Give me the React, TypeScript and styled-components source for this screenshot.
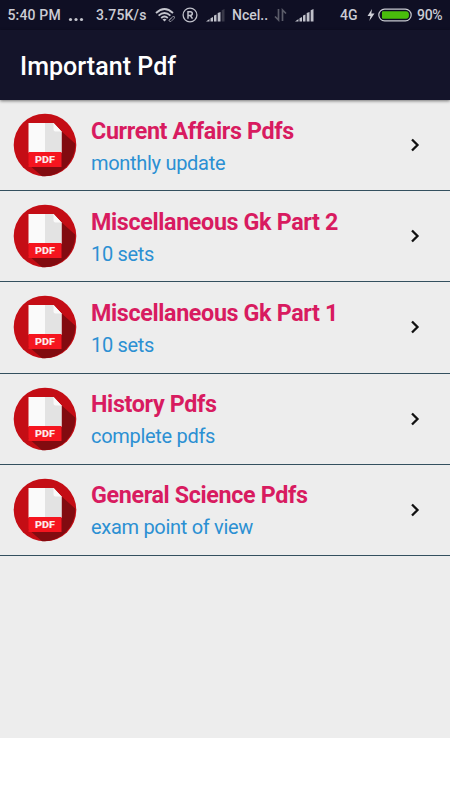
import React from 'react';
import styled, { createGlobalStyle } from 'styled-components';

const GlobalStyle = createGlobalStyle`
  body { margin: 0; background: #fff; font-family: Roboto, sans-serif; }
`;

const Screen = styled.div`
  width: 450px;
  height: 800px;
  display: flex;
  flex-direction: column;
  overflow: hidden;
  background: #fff;
`;

const StatusBar = styled.div`
  flex: none;
  height: 30px;
  display: flex;
  align-items: center;
  background: #0f0f24;
`;

const StatusText = styled.span<{ $gap: number; $width: number; $spacing?: number }>`
  flex: none;
  margin-left: ${p => p.$gap}px;
  width: ${p => p.$width}px;
  font-size: 14px;
  font-weight: 500;
  letter-spacing: ${p => p.$spacing ?? 0}px;
  line-height: 30px;
  white-space: nowrap;
  color: #cbccd4;
`;

const StatusIcon = styled.svg<{ $gap: number }>`
  flex: none;
  display: block;
  margin-left: ${p => p.$gap}px;
`;

const AppBar = styled.header`
  flex: none;
  height: 70px;
  display: flex;
  align-items: center;
  padding: 4px 0 0 20px;
  box-sizing: border-box;
  background: #14142a;
  box-shadow: 0 1px 3px rgba(0, 0, 0, 0.5);
  z-index: 1;
`;

const Heading = styled.h1`
  margin: 0;
  font-size: 25px;
  font-weight: 500;
  letter-spacing: 0.05px;
  line-height: 30px;
  color: #fff;
`;

const List = styled.main`
  flex: none;
  height: 638px;
  background: #ededed;
`;

const Row = styled.div`
  height: 91.2px;
  box-sizing: border-box;
  display: flex;
  align-items: center;
  padding: 0 25px 0 13px;
  border-bottom: 1px solid #34505f;
`;

const Badge = styled.svg`
  flex: none;
  display: block;
`;

const Labels = styled.div`
  flex: 1;
  margin-left: 14px;
  padding-top: 4.6px;
`;

const Title = styled.div`
  font-size: 23.3px;
  font-weight: 700;
  letter-spacing: -0.36px;
  line-height: 32px;
  white-space: nowrap;
  color: #d81b60;
`;

const Subtitle = styled.div`
  font-size: 20px;
  letter-spacing: -0.3px;
  line-height: 33.4px;
  white-space: nowrap;
  color: #2b90d3;
`;

const Chevron = styled.svg`
  flex: none;
  display: block;
`;

const items = [
  { title: 'Current Affairs Pdfs', subtitle: 'monthly update' },
  { title: 'Miscellaneous Gk Part 2', subtitle: '10 sets' },
  { title: 'Miscellaneous Gk Part 1', subtitle: '10 sets' },
  { title: 'History Pdfs', subtitle: 'complete pdfs' },
  { title: 'General Science Pdfs', subtitle: 'exam point of view' },
];

const Wifi = () => (
  <StatusIcon $gap={8} width="21" height="16" viewBox="0 0 21 16" fill="none" stroke="#c4c5cd" strokeWidth="1.8">
    <path d="M1 6Q9.500 -2 18 6M3.600 8.700Q9.500 3.200 15.400 8.700M6.200 11Q9.500 8 12.800 11" />
    <path d="M7.500 12.500L9.500 14.500L11.500 12.500Q9.500 10.800 7.500 12.500Z" fill="#c4c5cd" stroke="none" />
    <path d="M14 13.500L16.500 11M16 14.500L19.500 11Q20 9 18 9.500L14 13Q14 15 16 14.500Z" stroke="#858692" strokeWidth="1" />
  </StatusIcon>
);

const Registered = () => (
  <StatusIcon $gap={6} width="16" height="16" viewBox="0 0 16 16" fill="none" stroke="#bfc0c9">
    <circle cx="8" cy="8" r="6.900" strokeWidth="1.300" />
    <path d="M6 11.700V4.700H8.300Q10.300 4.700 10.300 6.600T8.300 8.500H6M8.300 8.500L10.500 11.700" strokeWidth="1.500" />
  </StatusIcon>
);

const Signal = ({ gap, weak }: { gap: number; weak?: boolean }) => (
  <StatusIcon $gap={gap} width="19" height="14" viewBox="0 0 19 14" fill="#bfc0c9">
    <path d="M0 13.500L3.500 11V13.500ZM4.500 10.300L7 9V13.500H4.500ZM8 7.500L10.500 6.500V13.500H8ZM11.700 5L14.500 4V13.500H11.700Z" />
    <path d="M15.700 2.300L18.500 1V13.500H15.700Z" fill={weak ? '#383848' : '#bfc0c9'} />
  </StatusIcon>
);

const DataArrows = () => (
  <StatusIcon $gap={6} width="14" height="14" viewBox="0 0 14 14" fill="none" stroke="#5b5c69" strokeWidth="1.700">
    <path d="M4.500 1V12L1 8.500M8.500 13V2L12 5.500" />
  </StatusIcon>
);

const Bolt = () => (
  <StatusIcon $gap={9} width="8" height="14" viewBox="0 0 8 14" fill="#d0d1d8">
    <path d="M5 1L0.500 8H3.500L2.300 13L7.500 5.500H4.300Z" />
  </StatusIcon>
);

const Battery = () => (
  <StatusIcon $gap={3} width="34" height="14" viewBox="0 0 34 14">
    <rect x="0.800" y="1.200" width="32.400" height="11.600" rx="5.800" fill="none" stroke="#c8cad0" strokeWidth="1.200" />
    <path d="M5 3.200H28Q31 3.200 31 7T28 10.800H5Q4 10.800 4 9.800V4.200Q4 3.200 5 3.200Z" fill="#49bd0c" />
  </StatusIcon>
);

const PdfBadge = () => (
  <Badge width="64" height="64" viewBox="0 0 64 64">
    <circle cx="32" cy="32" r="31.300" fill="#c40d15" />
    <path d="M47 17L62.100 30.500A31.300 31.300 0 0 1 29 63.200L15 51H48Z" fill="#820b10" />
    <path d="M15.500 10H40.500L48.500 18.500V40H15.500Z" fill="#fafafa" />
    <path d="M32 10H40.500L48.500 18.500V40H32Z" fill="#e3e3e3" />
    <path d="M40.500 10V16.500Q40.500 18.500 42.500 18.500H48.500Z" fill="#fafafa" />
    <rect x="15.500" y="39" width="33" height="15" fill="#f5151f" />
    <text x="32" y="50" textAnchor="middle" textLength="20" lengthAdjust="spacingAndGlyphs" fontFamily="Roboto, sans-serif" fontSize="9.800" fontWeight="900" fill="#fce9e9">PDF</text>
  </Badge>
);

export default function App() {
  return (
    <Screen>
      <GlobalStyle />
      <StatusBar>
        <StatusText $gap={7.500} $width={54.500} $spacing={0.15}>5:40 PM</StatusText>
        <StatusIcon $gap={6} width="16" height="14" viewBox="0 0 16 14" fill="#c4c5cd">
          <circle cx="2.500" cy="11.500" r="1.600" />
          <circle cx="8" cy="11.500" r="1.600" />
          <circle cx="13.500" cy="11.500" r="1.600" />
        </StatusIcon>
        <StatusText $gap={12} $width={51} $spacing={0.2}>3.75K/s</StatusText>
        <Wifi />
        <Registered />
        <Signal gap={8} weak />
        <StatusText $gap={7} $width={36}>Ncel..</StatusText>
        <DataArrows />
        <Signal gap={7} />
        <StatusText $gap={26} $width={18}>4G</StatusText>
        <Bolt />
        <Battery />
        <StatusText $gap={5} $width={28} $spacing={-0.3}>90%</StatusText>
      </StatusBar>
      <AppBar>
        <Heading>Important Pdf</Heading>
      </AppBar>
      <List>
        {items.map(item => (
          <Row key={item.title}>
            <PdfBadge />
            <Labels>
              <Title>{item.title}</Title>
              <Subtitle>{item.subtitle}</Subtitle>
            </Labels>
            <Chevron width="20" height="20" viewBox="0 0 20 20" fill="none" stroke="#111" strokeWidth="2.300">
              <path d="M7 4.500L12.500 10L7 15.500" />
            </Chevron>
          </Row>
        ))}
      </List>
    </Screen>
  );
}
